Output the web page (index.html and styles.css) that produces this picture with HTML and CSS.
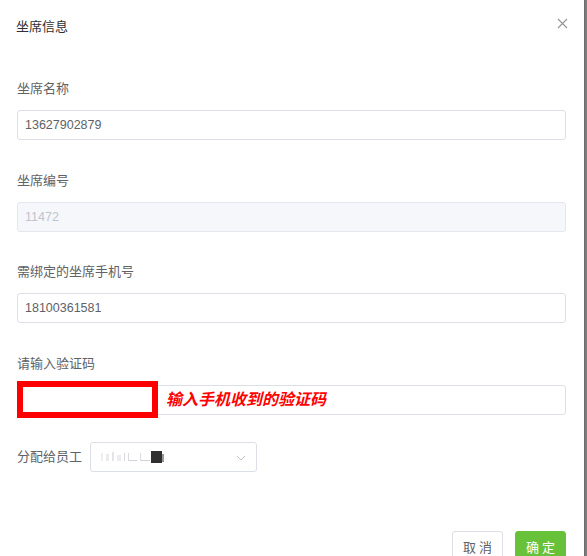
FILE: index.html
```html
<!DOCTYPE html>
<html lang="zh-CN">

<head>
    <meta charset="UTF-8">
    <meta name="viewport" content="width=device-width, initial-scale=1.0">
    <title>坐席信息</title>
    <link rel="stylesheet" href="styles.css">
</head>

<body>
    <div class="page">
        <div class="dialog">
            <div class="dialog-header">
                <span class="dialog-title">坐席信息</span>
                <button class="dialog-close" aria-label="关闭">
                    <svg width="11" height="11" viewBox="0 0 11 11">
                        <path d="M1 1L10 10M10 1L1 10" stroke="#909399" stroke-width="1.1" fill="none" />
                    </svg>
                </button>
            </div>

            <div class="form">
                <div class="form-item">
                    <label>坐席名称</label>
                    <input type="text" class="input" value="13627902879">
                </div>

                <div class="form-item">
                    <label>坐席编号</label>
                    <input type="text" class="input" value="11472" disabled>
                </div>

                <div class="form-item">
                    <label>需绑定的坐席手机号</label>
                    <input type="text" class="input" value="18100361581">
                </div>

                <div class="form-item">
                    <label>请输入验证码</label>
                    <div class="code-field">
                        <input type="text" class="input" value="">
                        <span class="mark-box"></span>
                        <span class="mark-text">输入手机收到的验证码</span>
                    </div>
                </div>

                <div class="form-item inline">
                    <label>分配给员工</label>
                    <div class="select">
                        <svg class="select-value" width="70" height="16" viewBox="0 0 70 16">
                            <rect x="1" y="4" width="2" height="8" fill="#eceef1" />
                            <rect x="6" y="5" width="3" height="7" fill="#e8eaed" />
                            <rect x="12" y="3" width="2" height="9" fill="#e2e4e8" />
                            <rect x="17" y="6" width="4" height="6" fill="#eaecef" />
                            <rect x="24" y="4" width="1" height="8" fill="#d6d9de" />
                            <rect x="28" y="11" width="9" height="1" fill="#cfd2d8" />
                            <rect x="28" y="4" width="1" height="8" fill="#d9dce0" />
                            <rect x="40" y="11" width="10" height="1" fill="#cfd2d8" />
                            <rect x="40" y="4" width="1" height="8" fill="#d9dce0" />
                            <rect x="51" y="2" width="11" height="12" fill="#2f2f2f" />
                            <rect x="62" y="5" width="2" height="8" fill="#9a9a9a" />
                        </svg>
                        <svg class="select-arrow" width="10" height="6" viewBox="0 0 10 6">
                            <path d="M1 1L5 5L9 1" stroke="#c0c4cc" stroke-width="1" fill="none" />
                        </svg>
                    </div>
                </div>
            </div>

            <div class="dialog-footer">
                <button class="btn">取消</button>
                <button class="btn btn-primary">确定</button>
            </div>
        </div>
        <div class="backdrop"></div>
    </div>
</body>

</html>
```

FILE: styles.css
```css
body {
    margin: 0;
    font-family: "Liberation Sans", "Noto Sans CJK SC", sans-serif;
    overflow: hidden;
}

.page {
    display: flex;
    height: 556px;
    overflow: hidden;
}

.dialog {
    width: 584px;
    flex-shrink: 0;
    box-sizing: border-box;
    padding: 0 18px 0 17px;
    background: #fff;
}

.backdrop {
    flex: 1;
    background: #7c7c7c;
    border-left: 1px solid #6e6e6e;
}

.dialog-header {
    display: flex;
    justify-content: space-between;
    align-items: center;
    height: 50px;
}

.dialog-title {
    margin-left: -1px;
    font-size: 13px;
    color: #303133;
}

.dialog-close {
    display: flex;
    padding: 0;
    margin-right: -2px;
    margin-top: -4px;
    border: none;
    background: none;
    cursor: pointer;
}

.form {
    padding-top: 25px;
}

.form-item {
    margin-bottom: 26.7px;
}

.form-item label {
    display: block;
    font-size: 13px;
    line-height: 28px;
    color: #606266;
    margin-bottom: 7px;
}

.input {
    display: block;
    width: 100%;
    height: 30px;
    box-sizing: border-box;
    padding: 0 7px;
    border: 1px solid #dcdfe6;
    border-radius: 3px;
    font-family: inherit;
    font-size: 12.5px;
    color: #606266;
    background: #fff;
    outline: none;
}

.input:disabled {
    background: #f5f7fa;
    border-color: #e4e7ed;
    color: #c0c4cc;
}

.code-field {
    position: relative;
}

.mark-box {
    position: absolute;
    left: 0;
    top: -4px;
    width: 141px;
    height: 37px;
    box-sizing: border-box;
    border: 6px solid #ff0000;
}

.mark-text {
    position: absolute;
    left: 149px;
    top: 4px;
    font-size: 16px;
    line-height: 22px;
    font-weight: bold;
    font-style: italic;
    color: #ff0000;
}

.form-item.inline {
    display: flex;
    align-items: center;
}

.form-item.inline label {
    width: 73px;
    margin-bottom: 0;
}

.select {
    display: flex;
    justify-content: space-between;
    align-items: center;
    width: 167px;
    height: 30px;
    box-sizing: border-box;
    padding: 0 10px 0 9px;
    border: 1px solid #dcdfe6;
    border-radius: 3px;
}

.select-arrow {
    margin-top: 2px;
}

.dialog-footer {
    display: flex;
    justify-content: flex-end;
    gap: 12px;
    margin-top: 59px;
}

.btn {
    width: 51px;
    height: 32px;
    padding: 0;
    border: 1px solid #dcdfe6;
    border-radius: 3px;
    background: #fff;
    font-family: inherit;
    font-size: 13px;
    letter-spacing: 3px;
    text-indent: 3px;
    color: #606266;
    cursor: pointer;
}

.btn-primary {
    background: #67c23a;
    border-color: #67c23a;
    color: #fff;
}
```
